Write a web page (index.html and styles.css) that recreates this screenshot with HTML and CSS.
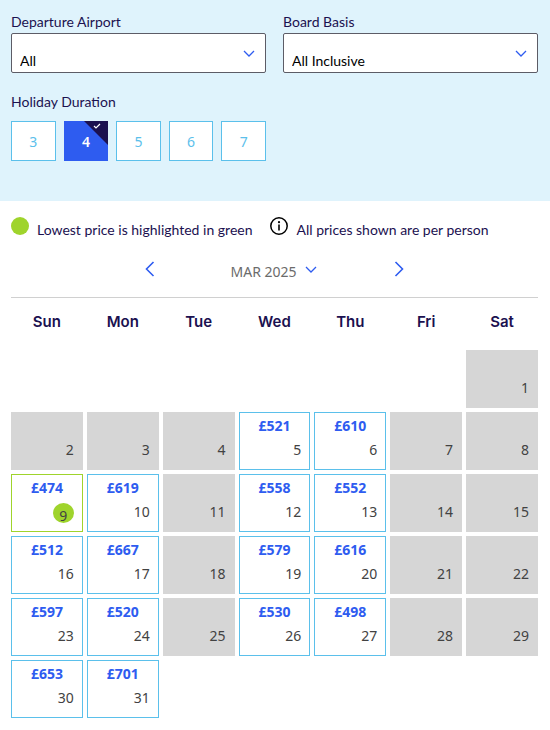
FILE: index.html
```html
<!DOCTYPE html>
<html lang="en">
<head>
<meta charset="utf-8">
<meta name="viewport" content="width=device-width, initial-scale=1">
<title>Holiday prices</title>
<link rel="stylesheet" href="styles.css">
</head>
<body>
<form class="filters">
  <div class="fields">
    <div class="field">
      <label for="airport">Departure Airport</label>
      <div class="select">
        <select id="airport"><option>All</option></select>
        <svg class="chevron" viewBox="0 0 12 7"><path d="M1 1l5 5 5-5"/></svg>
      </div>
    </div>
    <div class="field">
      <label for="board">Board Basis</label>
      <div class="select">
        <select id="board"><option>All Inclusive</option></select>
        <svg class="chevron" viewBox="0 0 12 7"><path d="M1 1l5 5 5-5"/></svg>
      </div>
    </div>
    <div class="field" role="group" aria-labelledby="duration">
      <span id="duration">Holiday Duration</span>
      <div class="durations">
        <button type="button">3</button>
        <button type="button" class="selected" aria-pressed="true">4<svg class="corner" viewBox="0 0 24 24"><path class="fold" d="M0 0h24v24z"/><path class="tick" d="M10 5l2 2 4-4"/></svg></button>
        <button type="button">5</button>
        <button type="button">6</button>
        <button type="button">7</button>
      </div>
    </div>
  </div>
</form>
<main class="calendar">
  <div class="legend">
    <span class="dot"></span>
    <span class="note">Lowest price is highlighted in green</span>
    <svg class="info" viewBox="0 0 18 18"><circle class="ring" cx="9" cy="9" r="8.2"/><circle cx="9" cy="5.2" r="1.1"/><path d="M8.2 7.4h1.6v6H8.2z"/></svg>
    <span class="note">All prices shown are per person</span>
  </div>
  <div class="months">
    <button type="button" class="arrow" aria-label="Previous month"><svg viewBox="0 0 10 16"><path d="M8.500 1L1.500 8l7 7"/></svg></button>
    <button type="button" class="month"><span>MAR 2025</span><svg class="chevron" viewBox="0 0 12 7"><path d="M1 1l5 5 5-5"/></svg></button>
    <button type="button" class="arrow" aria-label="Next month"><svg viewBox="0 0 10 16"><path d="M1.500 1l7 7-7 7"/></svg></button>
  </div>
  <table>
    <thead>
      <tr><th>Sun</th><th>Mon</th><th>Tue</th><th>Wed</th><th>Thu</th><th>Fri</th><th>Sat</th></tr>
    </thead>
    <tbody>
      <tr>
        <td></td><td></td><td></td><td></td><td></td><td></td>
        <td><div class="day off"><span>1</span></div></td>
      </tr>
      <tr>
        <td><div class="day off"><span>2</span></div></td>
        <td><div class="day off"><span>3</span></div></td>
        <td><div class="day off"><span>4</span></div></td>
        <td><button type="button" class="day"><b>£521</b><span>5</span></button></td>
        <td><button type="button" class="day"><b>£610</b><span>6</span></button></td>
        <td><div class="day off"><span>7</span></div></td>
        <td><div class="day off"><span>8</span></div></td>
      </tr>
      <tr>
        <td><button type="button" class="day lowest"><b>£474</b><span>9</span></button></td>
        <td><button type="button" class="day"><b>£619</b><span>10</span></button></td>
        <td><div class="day off"><span>11</span></div></td>
        <td><button type="button" class="day"><b>£558</b><span>12</span></button></td>
        <td><button type="button" class="day"><b>£552</b><span>13</span></button></td>
        <td><div class="day off"><span>14</span></div></td>
        <td><div class="day off"><span>15</span></div></td>
      </tr>
      <tr>
        <td><button type="button" class="day"><b>£512</b><span>16</span></button></td>
        <td><button type="button" class="day"><b>£667</b><span>17</span></button></td>
        <td><div class="day off"><span>18</span></div></td>
        <td><button type="button" class="day"><b>£579</b><span>19</span></button></td>
        <td><button type="button" class="day"><b>£616</b><span>20</span></button></td>
        <td><div class="day off"><span>21</span></div></td>
        <td><div class="day off"><span>22</span></div></td>
      </tr>
      <tr>
        <td><button type="button" class="day"><b>£597</b><span>23</span></button></td>
        <td><button type="button" class="day"><b>£520</b><span>24</span></button></td>
        <td><div class="day off"><span>25</span></div></td>
        <td><button type="button" class="day"><b>£530</b><span>26</span></button></td>
        <td><button type="button" class="day"><b>£498</b><span>27</span></button></td>
        <td><div class="day off"><span>28</span></div></td>
        <td><div class="day off"><span>29</span></div></td>
      </tr>
      <tr>
        <td><button type="button" class="day"><b>£653</b><span>30</span></button></td>
        <td><button type="button" class="day"><b>£701</b><span>31</span></button></td>
        <td></td><td></td><td></td><td></td><td></td>
      </tr>
    </tbody>
  </table>
</main>
</body>
</html>
```
FILE: styles.css
```css
* {
  box-sizing: border-box;
}

body {
  margin: 0;
  background: #fff;
  color: #1b1150;
  font: 14px/20px "Noto Sans", sans-serif;
}

button,
select {
  font: inherit;
  cursor: pointer;
}

svg {
  display: block;
  fill: none;
}

.filters {
  padding: 12px 12px 40px 11px;
  background: #dff3fc;
}

.fields {
  display: grid;
  grid-template-columns: 1fr 1fr;
  gap: 19px 17px;
}

.field label,
.field > span {
  display: block;
}

.field label,
.field > span,
.field select,
.note {
  font-family: Lato, sans-serif;
}

.select {
  display: grid;
  align-items: center;
  margin-top: 1px;
}

.select > * {
  grid-area: 1 / 1;
}

.select select {
  width: 100%;
  height: 40px;
  padding: 15px 8px 0;
  border: 1px solid #5c5c66;
  border-radius: 2px;
  background: #fff;
  color: #000;
  appearance: none;
}

.chevron {
  width: 12px;
  height: 7px;
  stroke: #2e5cf0;
  stroke-width: 1.3;
}

.select .chevron {
  justify-self: end;
  margin-right: 11px;
  pointer-events: none;
}

.durations {
  display: grid;
  grid-template-columns: repeat(5, 1fr);
  gap: 8px;
  margin-top: 9px;
}

.durations button {
  position: relative;
  height: 40px;
  padding: 2px 0 0;
  border: 1px solid #5bc0eb;
  background: #fff;
  color: #5bc0eb;
}

.durations .selected {
  border-color: #2e5cf0;
  background: #2e5cf0;
  color: #fff;
  font-weight: 600;
}

.corner {
  position: absolute;
  top: -1px;
  right: -1px;
  width: 24px;
  height: 24px;
}

.fold {
  fill: #1b1150;
}

.tick {
  stroke: #fff;
  stroke-width: 1.2;
}

.calendar {
  padding: 16px 12px 8px 11px;
}

.legend {
  display: flex;
  align-items: flex-start;
  gap: 8px;
}

.dot {
  width: 18px;
  height: 18px;
  border-radius: 50%;
  background: #9fd42c;
}

.note {
  margin-top: 3px;
}

.info {
  width: 18px;
  height: 18px;
  margin-left: 10px;
  fill: #000;
}

.ring {
  fill: none;
  stroke: #000;
  stroke-width: 1.5;
}

.months {
  display: flex;
  justify-content: center;
  align-items: center;
  gap: 75px;
  padding: 16px 0 15px;
  border-bottom: 1px solid #d0d0d0;
}

.months button {
  padding: 0;
  border: 0;
  background: none;
}

.arrow svg {
  width: 10px;
  height: 16px;
  stroke: #2e5cf0;
  stroke-width: 1.6;
}

.months .month {
  display: flex;
  align-items: center;
  gap: 8px;
  padding-right: 2px;
  color: #6b6b6b;
}

.month span {
  padding-top: 6px;
}

table {
  width: calc(100% + 8px);
  margin: 0 -4px;
  border-spacing: 4px;
  table-layout: fixed;
}

th {
  height: 44px;
  padding: 0 0 4px;
  font: 600 15px/20px Inter, sans-serif;
}

td {
  padding: 0;
}

.day {
  display: flex;
  flex-direction: column;
  justify-content: space-between;
  align-items: center;
  width: 100%;
  height: 58px;
  padding: 3px 8px 9px;
  border: 1px solid #5bc0eb;
  background: #fff;
  color: #424242;
}

.day b {
  color: #2e5cf0;
}

.day span {
  align-self: flex-end;
}

.off {
  justify-content: flex-end;
  border-color: #d6d6d6;
  background: #d6d6d6;
}

.lowest {
  padding-bottom: 8px;
  border-color: #9fd42c;
}

.lowest span {
  width: 21px;
  height: 20px;
  padding-top: 3px;
  border-radius: 50%;
  background: #9fd42c;
}
```
